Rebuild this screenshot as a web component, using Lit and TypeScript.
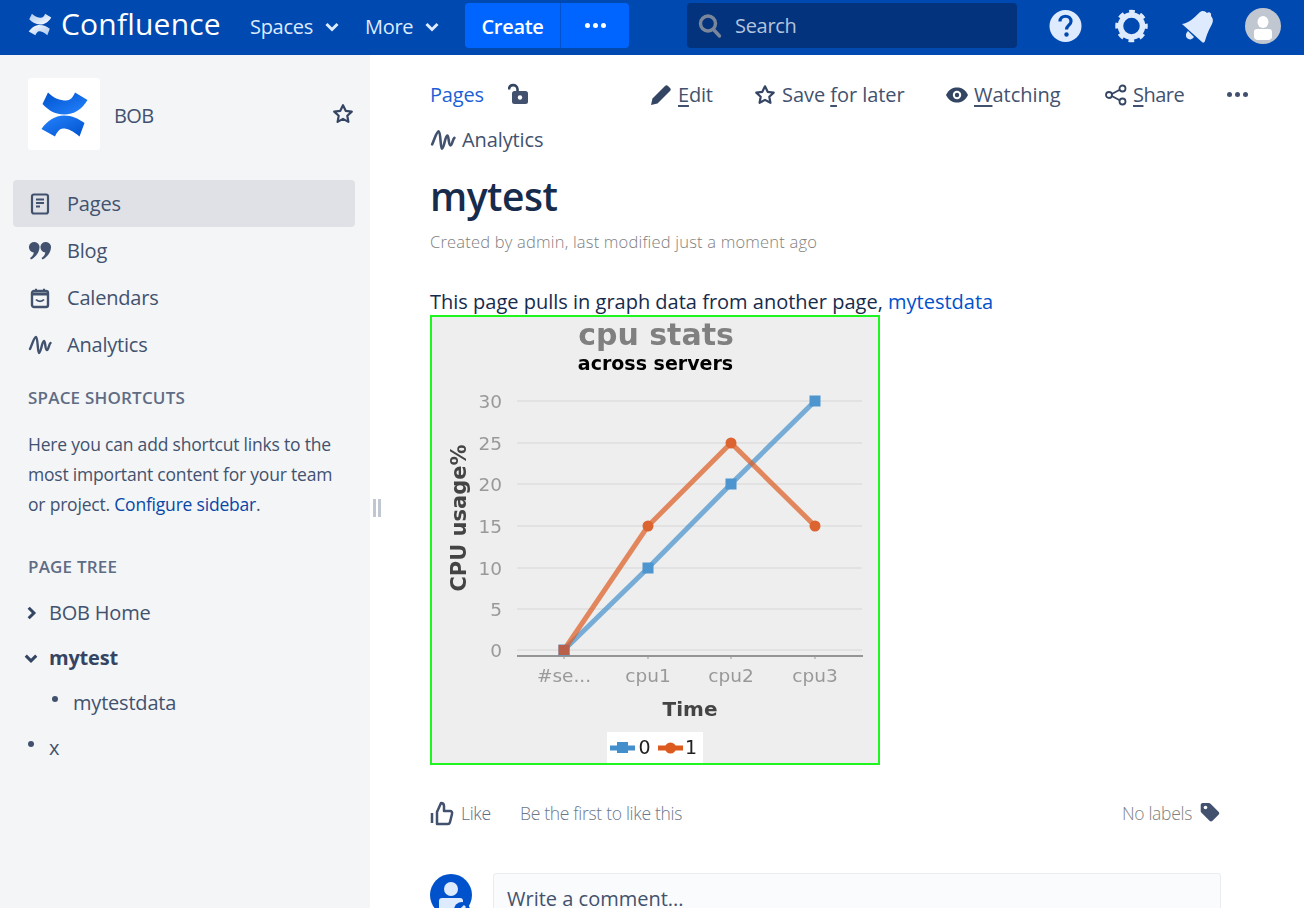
import { LitElement, html, css, svg } from "lit";
import { customElement } from "lit/decorators.js";

const logo = (white: boolean) => html`
  <svg class=${white ? "brand-mark" : "space-mark"} viewBox="40 90 49 47">
    <defs>
      <linearGradient id="fa" x1="0" y1="0" x2="1" y2="1"><stop offset="0" stop-color="#0052cc"/><stop offset="1" stop-color="#2684ff"/></linearGradient>
      <linearGradient id="fb" x1="0" y1="0" x2="1" y2="1"><stop offset="0" stop-color="#2684ff"/><stop offset="1" stop-color="#0052cc"/></linearGradient>
      <linearGradient id="wa" x1="0" y1="0" x2="1" y2="1"><stop offset="0" stop-color="#a9c6ee"/><stop offset="1" stop-color="#fff"/></linearGradient>
      <linearGradient id="wb" x1="0" y1="0" x2="1" y2="1"><stop offset="0" stop-color="#fff"/><stop offset="1" stop-color="#a9c6ee"/></linearGradient>
    </defs>
    <path d="M48 91.500 C54 97.500 60 99.500 66 99.500 C70 99.500 73 96.500 75 91.500 L87.500 99 C82 108.500 74 113.500 64 113.500 C56 113.500 49 110 42.500 103 Z" fill=${white ? "url(#wa)" : "url(#fa)"}/>
    <path d="M41.500 128 C47 120 55 114.500 64 114.500 C72 114.500 79 118 84.500 122 L79.500 135.500 C73 130 68 127.500 63 127.500 C60 127.500 57 131 55 135.500 Z" fill=${white ? "url(#wb)" : "url(#fb)"}/>
  </svg>`;

const star = html`<svg class="ico" viewBox="0 0 24 24"><path d="M12 3.200l2.700 5.600 6.100.8-4.500 4.200 1.100 6.100-5.400-3-5.400 3 1.100-6.100-4.500-4.200 6.100-.8z" fill="none" stroke="#344563" stroke-width="2.200" stroke-linejoin="round"/></svg>`;
const pulse = html`<svg class="ico" viewBox="0 0 24 24"><path d="M2 16 C4 12 6 4 8 4 C10 4 9.500 20 11 20 C13 20 14 8 16 8 C17.500 8 17 17 19 17 C20.500 17 21 11 22.500 10" fill="none" stroke="#42526e" stroke-width="2.400" stroke-linecap="round" stroke-linejoin="round"/></svg>`;

const navIcons = {
  Pages: html`<svg class="ico" viewBox="0 0 24 24"><rect x="4" y="2.500" width="16" height="19" rx="2" fill="none" stroke="#42526e" stroke-width="2.200"/><path d="M8 7.500h8M8 11h8M8 14.500h4" stroke="#42526e" stroke-width="2"/></svg>`,
  Blog: html`<svg class="ico" viewBox="0 0 24 24"><path d="M6.500 3a5 5 0 0 1 5 5.500c-.3 5-3.500 9.500-8.500 12l-1-1.500c2-1.300 3.500-3.300 3.800-5.600A5 5 0 0 1 6.500 3zM18 3a5 5 0 0 1 5 5.500c-.3 5-3.500 9.500-8.500 12l-1-1.500c2-1.300 3.500-3.300 3.800-5.600A5 5 0 0 1 18 3z" fill="#42526e"/></svg>`,
  Calendars: html`<svg class="ico" viewBox="0 0 24 24"><rect x="4" y="5" width="16" height="16" rx="2" fill="none" stroke="#42526e" stroke-width="2.400"/><path d="M4 8h16" stroke="#42526e" stroke-width="3"/><path d="M8 2.800v3M16 2.800v3" stroke="#42526e" stroke-width="2"/><path d="M8 13.500c2 2.400 6 2.400 8 0" fill="none" stroke="#42526e" stroke-width="1.800"/></svg>`,
  Analytics: pulse,
} as Record<string, unknown>;

@customElement("side-bar")
class SideBar extends LitElement {
  static styles = css`
    :host {
      display: block;
      width: 370px;
      height: 100%;
      flex: none;
      background: #f4f5f7;
      color: #42526e;
      font-family: "Open Sans", "Noto Sans", sans-serif;
      position: relative;
      box-sizing: border-box;
      padding: 23px 15px 0 13px;
    }
    .space { display: flex; align-items: center; padding-left: 15px; height: 72px; }
    .space-box {
      width: 72px; height: 72px; background: #fff; border-radius: 3px;
      display: flex; align-items: center; justify-content: center; margin-right: 14px;
    }
    .space-mark { width: 49px; height: 47px; }
    .space-name { font-size: 20px; letter-spacing: -0.6px; flex: 1; padding-top: 2px; }
    .space .ico { width: 24px; height: 24px; }
    nav { margin-top: 30px; }
    .row {
      height: 47px; display: flex; align-items: center; font-size: 20px;
      border-radius: 4px; padding-left: 15px; letter-spacing: -0.2px;
    }
    .row.on { background: #dfe1e6; }
    .row .ico { width: 24px; height: 24px; margin-right: 15px; }
    h4 {
      margin: 0; font-size: 17px; font-weight: 600; color: #5e6c84; padding-left: 15px;
      letter-spacing: 0.2px; line-height: 24px;
    }
    .shortcuts { margin-top: 18px; }
    .shortcuts p {
      margin: 19px 0 0; padding-left: 15px; font-size: 17.500px; line-height: 30px;
      letter-spacing: -0.2px; white-space: nowrap;
    }
    a { color: #0747a6; text-decoration: none; }
    .tree { margin-top: 36px; }
    .tree ul { list-style: none; margin: 11px 0 0; padding: 0; }
    .tree li {
      height: 45px; display: flex; align-items: center; font-size: 20px; letter-spacing: -0.2px;
      padding-left: 36px; position: relative;
    }
    .tree li.sub { padding-left: 60px; }
    .tree li.bold { font-weight: 700; color: #344563; }
    .tree .tw { position: absolute; left: 11px; top: 50%; width: 14px; height: 14px; margin-top: -7px; }
    .tree .dot { position: absolute; width: 6px; height: 6px; background: #42526e; border-radius: 50%; left: 15px; top: 16px; }
    .tree li.sub .dot { left: 39px; }
    .grip {
      position: absolute; left: 373px; top: 444px; width: 2px; height: 18px;
      border-left: 3px solid #c1c7d0; border-right: 3px solid #c1c7d0;
    }
  `;

  render() {
    return html`
      <div class="space">
        <div class="space-box">${logo(false)}</div>
        <div class="space-name">BOB</div>
        ${star}
      </div>
      <nav>
        ${["Pages", "Blog", "Calendars", "Analytics"].map(
          (n, i) => html`<div class="row ${i === 0 ? "on" : ""}">${navIcons[n]}${n}</div>`
        )}
      </nav>
      <div class="shortcuts">
        <h4>SPACE SHORTCUTS</h4>
        <p>Here you can add shortcut links to the<br />most important content for your team<br />or project. <a>Configure sidebar</a>.</p>
      </div>
      <div class="tree">
        <h4>PAGE TREE</h4>
        <ul>
          <li><svg class="tw" viewBox="0 0 12 12"><path d="M4 1.500L8.500 6 4 10.500" fill="none" stroke="#344563" stroke-width="2.600"/></svg>BOB Home</li>
          <li class="bold"><svg class="tw" viewBox="0 0 12 12"><path d="M1.500 4L6 8.500 10.500 4" fill="none" stroke="#344563" stroke-width="2.600"/></svg>mytest</li>
          <li class="sub"><span class="dot"></span>mytestdata</li>
          <li><span class="dot"></span>x</li>
        </ul>
      </div>
      <div class="grip"></div>
    `;
  }
}

@customElement("top-bar")
class TopBar extends LitElement {
  static styles = css`
    :host {
      display: flex; align-items: center; height: 55px; background: #0049b0; color: #deebff;
      font-family: "Open Sans", "Noto Sans", sans-serif; padding: 0 0 4px 28px; box-sizing: border-box;
    }
    .brand-mark { width: 24px; height: 23px; margin: -2px 9px 0 0; }
    .brand { font-size: 30px; color: #fff; width: 189px; letter-spacing: 0.2px; white-space: nowrap; margin-top: -4px; }
    .menu { display: flex; align-items: center; font-size: 20px; letter-spacing: -0.3px; padding-top: 2px; }
    .menu svg { width: 16px; height: 14px; margin-left: 11px; }
    .spaces { width: 115px; }
    .more { width: 100px; }
    .create {
      display: flex; height: 45px; background: #0065ff; border-radius: 4px; color: #fff;
      font-weight: 600; font-size: 20px; width: 164px; letter-spacing: -0.3px;
    }
    .create div { display: flex; align-items: center; justify-content: center; }
    .create .label { width: 95px; border-right: 1px solid #0052cc; padding-top: 2px; }
    .create .dots { flex: 1; gap: 3px; }
    .create .dots i { width: 5px; height: 5px; border-radius: 50%; background: #fff; }
    .search {
      margin-left: 58px; width: 330px; height: 45px; background: #03337c; border-radius: 4px;
      display: flex; align-items: center; font-size: 20px; color: #b3c4de; letter-spacing: -0.3px;
      box-sizing: border-box; padding: 0 0 0 11px;
    }
    .search svg { width: 24px; height: 26px; margin-right: 13px; }
    .right { display: flex; align-items: center; margin-left: 15px; }
    .right svg { display: block; }
    .right .cell { width: 66px; display: flex; justify-content: center; }
  `;

  render() {
    return html`
      ${logo(true)}
      <div class="brand">Confluence</div>
      <div class="menu spaces">Spaces<svg viewBox="0 0 16 14"><path d="M2.500 4l5.500 5.500L13.500 4" fill="none" stroke="#deebff" stroke-width="3"/></svg></div>
      <div class="menu more">More<svg viewBox="0 0 16 14"><path d="M2.500 4l5.500 5.500L13.500 4" fill="none" stroke="#deebff" stroke-width="3"/></svg></div>
      <div class="create">
        <div class="label">Create</div>
        <div class="dots"><i></i><i></i><i></i></div>
      </div>
      <div class="search">
        <svg viewBox="0 0 24 26"><circle cx="10" cy="10.500" r="7.500" fill="none" stroke="#7a869a" stroke-width="3.400"/><path d="M15.500 16.500l6 6.500" stroke="#7a869a" stroke-width="3.400" stroke-linecap="round"/></svg>
        Search
      </div>
      <div class="right">
        <div class="cell">
          <svg width="33" height="34" viewBox="0 0 33 34">
            <circle cx="16.500" cy="17" r="16" fill="#deebff"/>
            <path d="M11 12.500c0-7 11-7 11 0 0 3.500-4.500 4-4.500 8" fill="none" stroke="#0049b0" stroke-width="3.200"/>
            <circle cx="17.500" cy="25.500" r="2.200" fill="#0049b0"/>
          </svg>
        </div>
        <div class="cell">
          <svg width="33" height="34" viewBox="0 0 33 34">
            <circle cx="16.500" cy="17" r="11" fill="none" stroke="#deebff" stroke-width="5.500"/>
            <circle cx="16.500" cy="17" r="14" fill="none" stroke="#deebff" stroke-width="4.500" stroke-dasharray="5.500 5.500" stroke-dashoffset="2.750"/>
          </svg>
        </div>
        <div class="cell">
          <svg width="33" height="36" viewBox="0 0 33 36">
            <path d="M1 16 C8 15 14 9 18 5 C21 2 24 3 26 5 C28 3 31 5 30 8 C33 11 32 15 30 18 C27 23 25 29 24 33 C23 35 22 35 21 34 Z" fill="#deebff"/>
            <path d="M7 23 L13 29 C11 32 8 32 6 30 C4 28 5 25 7 23 Z" fill="#deebff"/>
          </svg>
        </div>
        <div class="cell">
          <svg width="36" height="36" viewBox="0 0 36 36">
            <circle cx="18" cy="18" r="18" fill="#c1c7d0"/>
            <ellipse cx="18" cy="14" rx="5.500" ry="6" fill="#fff"/>
            <path d="M9 24 Q9 21 12 21 H24 Q27 21 27 24 V29 Q27 31 24 32 H12 Q9 31 9 29 Z" fill="#fff"/>
          </svg>
        </div>
      </div>
    `;
  }
}

const Y_LABELS = [
  [30, 401], [25, 443], [20, 484], [15, 526], [10, 568], [5, 609], [0, 650],
];
const X_LABELS = [[564, "#se..."], [648, "cpu1"], [731, "cpu2"], [815, "cpu3"]] as [number, string][];
const BLUE = [[564, 650], [648, 568], [731, 484], [815, 401]];
const ORANGE = [[564, 650], [648, 526], [731, 443], [815, 526]];

@customElement("cpu-chart")
class CpuChart extends LitElement {
  static styles = css`
    :host { display: block; width: 450px; height: 450px; }
    svg { display: block; }
    text { font-family: "DejaVu Sans", sans-serif; }
    .soft { filter: blur(0.55px); }
  `;

  render() {
    const pts = (a: number[][]) => a.map((p) => p.join(",")).join(" ");
    return html`
      <svg width="450" height="450" viewBox="430 315 450 450">
        <rect x="431" y="316" width="448" height="448" fill="#eeeeee" stroke="#1ff51f" stroke-width="2"/>
        <g class="soft">
          <text x="656" y="345" text-anchor="middle" font-size="30" font-weight="700" fill="#808080">cpu stats</text>
          <text x="655.500" y="370" text-anchor="middle" font-size="19" font-weight="700" fill="#000">across servers</text>
          ${Y_LABELS.map(([v, y]) => svg`
            <line x1="517" x2="862" y1=${y} y2=${y} stroke="#dedede" stroke-width="1.500"/>
            <text x="502" y=${y + 6.500} text-anchor="end" font-size="18.500" fill="#999">${v}</text>`)}
          <line x1="517" x2="863" y1="656" y2="656" stroke="#777" stroke-width="1.500"/>
          ${X_LABELS.map(([x, t]) => svg`
            <line x1=${x} x2=${x} y1="656" y2="659" stroke="#999"/>
            <text x=${x} y="682" text-anchor="middle" font-size="18.500" fill="#999">${t}</text>`)}
          <text transform="translate(466 518) rotate(-90)" text-anchor="middle" font-size="21" font-weight="700" fill="#444">CPU usage%</text>
          <text x="690" y="716" text-anchor="middle" font-size="20" font-weight="700" fill="#444">Time</text>
          <polyline points=${pts(BLUE)} fill="none" stroke="#4390ca" stroke-opacity=".7" stroke-width="5"/>
          ${BLUE.map(([x, y]) => svg`<rect x=${x - 5.500} y=${y - 5.500} width="11" height="11" fill="#4c95cf"/>`)}
          <polyline points=${pts(ORANGE)} fill="none" stroke="#dd5b20" stroke-opacity=".7" stroke-width="5"/>
          ${ORANGE.slice(1).map(([x, y]) => svg`<circle cx=${x} cy=${y} r="5.500" fill="#dc6430"/>`)}
          <rect x="558.500" y="645" width="11" height="10" fill="#b9604a"/>
          <rect x="607" y="732" width="96" height="31" fill="#fff"/>
          <line x1="610" x2="635" y1="748" y2="748" stroke="#428fcb" stroke-width="5"/>
          <rect x="617" y="742" width="11" height="11" fill="#428fcb"/>
          <text x="644.500" y="754" text-anchor="middle" font-size="19" fill="#222">0</text>
          <line x1="658" x2="683" y1="748" y2="748" stroke="#dd5a1f" stroke-width="5"/>
          <circle cx="670.500" cy="748" r="5.500" fill="#dd5a1f"/>
          <text x="691" y="754" text-anchor="middle" font-size="19" fill="#222">1</text>
        </g>
      </svg>
    `;
  }
}

@customElement("page-body")
class PageBody extends LitElement {
  static styles = css`
    :host {
      display: block; flex: 1; min-width: 0; box-sizing: border-box; padding: 22px 83px 0 60px;
      font-family: "Open Sans", "Noto Sans", sans-serif; color: #172b4d;
    }
    a { color: #0052cc; text-decoration: none; }
    .bar { display: flex; align-items: center; height: 35px; font-size: 20px; letter-spacing: -0.2px; color: #42526e; margin-right: -30px; }
    .bar > * { flex: none; }
    .crumb { width: 78px; color: #1d5fd6; }
    .lock { width: 142px; display: flex; }
    .lock svg { width: 20px; height: 22px; margin-bottom: 2px; }
    .act { display: flex; align-items: center; }
    .act svg { width: 22px; height: 22px; margin-right: 6px; }
    .act.edit { width: 104px; }
    .act.save { width: 192px; letter-spacing: -0.05px; }
    .act.watch { width: 159px; letter-spacing: 0; }
    .act.share { width: 122px; letter-spacing: -0.5px; }
    .act u { text-underline-offset: 3px; }
    .more { display: flex; gap: 3px; }
    .more i { width: 5px; height: 5px; border-radius: 50%; background: #42526e; }
    .crumb2 { display: flex; align-items: center; margin-top: 10px; height: 35px; font-size: 20px; letter-spacing: -0.1px; color: #42526e; }
    .crumb2 svg { width: 26px; height: 26px; margin-right: 6px; }
    h1 { margin: 15px 0 0; font-size: 39px; font-weight: 600; line-height: 48px; letter-spacing: -0.5px; }
    .by { margin-top: 10px; font-size: 16.500px; line-height: 24px; color: #808080; font-weight: 300; letter-spacing: 0.2px; }
    p { margin: 35px 0 0; font-size: 20px; line-height: 26px; letter-spacing: 0; height: 26px; white-space: nowrap; }
    .likes { display: flex; align-items: center; height: 30px; margin-top: 33px; font-size: 17.500px; font-weight: 300; color: #6b778c; letter-spacing: -0.3px; }
    .likes svg { width: 24px; height: 26px; margin-right: 7px; }
    .likes .like { color: #5e6c84; width: 59px; }
    .likes .right { margin-left: auto; display: flex; align-items: center; color: #808080; }
    .likes .right svg { width: 20px; height: 20px; margin: -2px 1px 0 8px; }
    .comment { display: flex; margin-top: 45px; }
    .who { width: 42px; height: 42px; flex: none; margin: 1px 21px 0 0; }
    .box {
      flex: 1; height: 60px; border: 1px solid #ebecf0; border-radius: 3px; background: #fafbfc;
      box-sizing: border-box; padding: 11px 13px; font-size: 20px; letter-spacing: 0; color: #42526e;
    }
  `;

  render() {
    return html`
      <div class="bar">
        <a class="crumb">Pages</a>
        <div class="lock">
          <svg viewBox="0 0 20 22"><path d="M1 6.500C1 1 9 .5 9.500 6v4" fill="none" stroke="#344563" stroke-width="2.600"/><rect x="4" y="8" width="16" height="13" rx="2.500" fill="#42526e"/><circle cx="12" cy="14.500" r="2.200" fill="#fff"/></svg>
        </div>
        <div class="act edit">
          <svg viewBox="0 0 22 22"><path d="M1 21l1.500-6.500L15 2c1-1 2-1 3 0l2 2c1 1 1 2 0 3L7.500 19.500z" fill="#344563"/></svg>
          <span><u>E</u>dit</span>
        </div>
        <div class="act save">
          <svg viewBox="0 0 24 24"><path d="M12 2.500l2.900 6 6.600.9-4.800 4.500 1.200 6.600L12 17.300 6.100 20.500l1.200-6.600L2.500 9.400l6.600-.9z" fill="none" stroke="#344563" stroke-width="2.400" stroke-linejoin="round"/></svg>
          <span>Save <u>f</u>or later</span>
        </div>
        <div class="act watch">
          <svg viewBox="0 0 22 22"><path d="M0 11C3 5 7 3.500 11 3.500S19 5 22 11c-3 6-7 7.500-11 7.500S3 17 0 11z" fill="#344563"/><circle cx="11" cy="11" r="4.200" fill="#fff"/><circle cx="11" cy="11" r="2.200" fill="#344563"/></svg>
          <span><u>W</u>atching</span>
        </div>
        <div class="act share">
          <svg viewBox="0 0 22 22"><path d="M17 4.500L5 11l12 6.500" fill="none" stroke="#344563" stroke-width="1.800"/><circle cx="17.500" cy="4.500" r="3" fill="#fff" stroke="#344563" stroke-width="1.800"/><circle cx="4" cy="11" r="3" fill="#fff" stroke="#344563" stroke-width="1.800"/><circle cx="17.500" cy="17.500" r="3" fill="#fff" stroke="#344563" stroke-width="1.800"/></svg>
          <span><u>S</u>hare</span>
        </div>
        <div class="more"><i></i><i></i><i></i></div>
      </div>
      <div class="crumb2">${pulse}Analytics</div>
      <h1>mytest</h1>
      <div class="by">Created by admin, last modified just a moment ago</div>
      <p>This page pulls in graph data from another page, <a>mytestdata</a></p>
      <cpu-chart></cpu-chart>
      <div class="likes">
        <svg viewBox="0 0 24 26"><path d="M2 13v10M7 12l4-9c2 0 3 1.500 3 3v5h6c1.500 0 2.500 1 2 3l-2 8c-.3 1.200-1 2-2 2H7z" fill="none" stroke="#42526e" stroke-width="2.500" stroke-linejoin="round"/></svg>
        <span class="like">Like</span>
        <span>Be the first to like this</span>
        <div class="right">No labels
          <svg viewBox="0 0 20 20"><path d="M2.500 1h6c1 0 1.500.3 2 .8l8 8c1 1 1 2 0 3l-6 6c-1 1-2 1-3 0l-8-8c-.5-.5-.8-1-.8-2V3c0-1 .8-2 1.800-2z" fill="#42526e"/><circle cx="5.500" cy="5.500" r="1.800" fill="#fff"/></svg>
        </div>
      </div>
      <div class="comment">
        <svg class="who" viewBox="0 0 42 42">
          <circle cx="21" cy="21" r="21" fill="#0052cc"/>
          <circle cx="21" cy="15" r="7" fill="#deebff"/>
          <path d="M9 27q0-3 3-3h18q3 0 3 3v15H9z" fill="#deebff"/>
          <circle cx="32" cy="36" r="8" fill="#0052cc"/>
          <path d="M28 39l7-7" stroke="#deebff" stroke-width="3"/>
        </svg>
        <div class="box">Write a comment...</div>
      </div>
    `;
  }
}

@customElement("app-root")
export class AppRoot extends LitElement {
  static styles = css`
    :host { display: block; width: 100%; height: 908px; overflow: hidden; background: #fff; }
    .main { display: flex; height: 853px; }
  `;

  render() {
    return html`
      <top-bar></top-bar>
      <div class="main">
        <side-bar></side-bar>
        <page-body></page-body>
      </div>
    `;
  }
}
